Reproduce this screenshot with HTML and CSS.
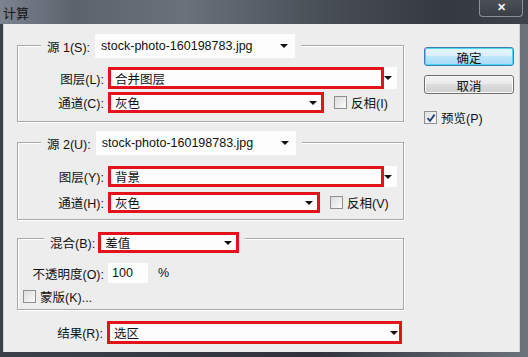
FILE: index.html
```html
<!DOCTYPE html>
<html lang="zh-CN">
<head>
  <meta charset="UTF-8" />
  <title>计算</title>
  <link rel="stylesheet" href="styles.css">
</head>
<body>
  <div class="window">
    <div class="titlebar">
      <span class="title">计算</span>
      <span class="close">✕</span>
    </div>

    <div class="client">
      <div class="main">

        <div class="group g1">
          <div class="group-head">
            <span class="head-label">源 1(S):</span>
            <div class="combo src"><span class="val">stock-photo-160198783.jpg</span><span class="arrow"></span></div>
          </div>
          <div class="row r-top">
            <span class="lbl">图层(L):</span>
            <div class="combo wide"><span class="mark">合并图层</span><span class="arrow"></span></div>
          </div>
          <div class="row r-ch">
            <span class="lbl">通道(C):</span>
            <div class="combo marked ch1"><span class="val">灰色</span><span class="arrow"></span></div>
            <label class="check"><span class="box"></span>反相(I)</label>
          </div>
        </div>

        <div class="group g2">
          <div class="group-head">
            <span class="head-label">源 2(U):</span>
            <div class="combo src"><span class="val">stock-photo-160198783.jpg</span><span class="arrow"></span></div>
          </div>
          <div class="row r-top2">
            <span class="lbl">图层(Y):</span>
            <div class="combo wide"><span class="mark">背景</span><span class="arrow"></span></div>
          </div>
          <div class="row r-ch2">
            <span class="lbl">通道(H):</span>
            <div class="combo marked ch2"><span class="val">灰色</span><span class="arrow"></span></div>
            <label class="check"><span class="box"></span>反相(V)</label>
          </div>
        </div>

        <div class="group g3">
          <div class="group-head blend-head">
            <span class="head-label">混合(B):</span>
            <div class="combo marked blend"><span class="val">差值</span><span class="arrow"></span></div>
          </div>
          <div class="row r-opacity">
            <span class="lbl">不透明度(O):</span>
            <div class="field">100</div>
            <span class="pct">%</span>
          </div>
          <label class="check mask"><span class="box"></span>蒙版(K)...</label>
        </div>

        <div class="row r-result">
          <span class="lbl">结果(R):</span>
          <div class="combo marked result"><span class="val">选区</span><span class="arrow"></span></div>
        </div>

      </div>

      <div class="side">
        <button class="btn btn-default">确定</button>
        <button class="btn">取消</button>
        <label class="check preview"><span class="box checked">
          <svg width="10" height="10" viewBox="0 0 10 10"><path d="M1.5 5.2 L4 7.8 L8.6 1.6" fill="none" stroke="#25407a" stroke-width="1.8"/></svg>
        </span>预览(P)</label>
      </div>
    </div>
  </div>
</body>
</html>
```

FILE: styles.css
```css
body {
  margin: 0;
  width: 528px;
  height: 357px;
  overflow: hidden;
  background: #2c3037;
  font-family: "Liberation Sans", "Noto Sans CJK SC", sans-serif;
  font-size: 12.5px;
  color: #111;
}

.window {
  width: 528px;
  height: 357px;
  background: linear-gradient(90deg, #3c4047 0%, #30343a 60%, #6d737b 100%);
}

.titlebar {
  height: 24px;
  display: flex;
  align-items: flex-start;
  background: linear-gradient(90deg, #7b838f 0%, #5c636d 14%, #6a717b 35%, #4a5058 60%, #34383f 85%, #3e434a 100%);
}

.title {
  padding: 3px 0 0 3px;
  color: #161616;
  font-size: 13px;
}

.close {
  margin-left: auto;
  margin-right: 5px;
  width: 42px;
  height: 16px;
  border: 1px solid #8b9097;
  border-top: none;
  border-radius: 0 0 4px 4px;
  background: linear-gradient(#4b5058, #3a3e45);
  color: #f2f2f2;
  font-size: 11px;
  font-weight: bold;
  text-align: center;
  line-height: 15px;
}

.client {
  display: flex;
  margin-left: 3px;
  width: 517px;
  height: 328px;
  border-left: 1px solid #cfd3d8;
  border-right: 1px solid #cfd3d8;
  background: #ededed;
  box-sizing: border-box;
  padding: 10px 0 0 13px;
}

.main {
  width: 387px;
  display: flex;
  flex-direction: column;
}

.group {
  border: 1px solid #a8a8a8;
  box-shadow: inset 1px 1px 0 #fff, 1px 1px 0 #fff;
  display: flex;
  flex-direction: column;
}

.g1 {
  margin-top: 11px;
  padding-bottom: 8px;
}

.g2 {
  margin-top: 20px;
  padding-bottom: 6px;
}

.g3 {
  margin-top: 18px;
  padding-bottom: 5px;
}

.group-head {
  display: flex;
  align-items: center;
  align-self: flex-start;
  height: 24px;
  margin: -12px 0 0 23px;
  padding: 0 6px;
  background: #ededed;
}

.head-label {
  margin-right: 5px;
}

.blend-head {
  height: 21px;
  margin: -7px 0 0 26px;
  padding: 0 6px 0 6px;
}

.blend-head .head-label {
  margin-right: 3px;
}

.row {
  display: flex;
  align-items: center;
}

.lbl {
  width: 86px;
  text-align: right;
  margin-right: 4px;
  white-space: nowrap;
}

.r-top { margin-top: 9px; height: 22px; }
.r-ch { margin-top: 3px; height: 21px; }
.r-top2 { margin-top: 11px; height: 21px; }
.r-ch2 { margin-top: 5px; height: 21px; }
.r-opacity { margin-top: 10px; height: 20px; }
.r-result { margin-top: 11px; height: 23px; }

.combo {
  display: flex;
  align-items: center;
  background: #fdfdfd;
  height: 100%;
  box-sizing: border-box;
}

.src {
  width: 200px;
  height: 24px;
  padding: 0 7px 0 6px;
}

.val {
  white-space: nowrap;
}

.arrow {
  margin-left: auto;
  width: 0;
  height: 0;
  border-left: 4px solid transparent;
  border-right: 4px solid transparent;
  border-top: 4px solid #111;
}

.wide {
  width: 289px;
  padding-right: 5px;
}

.mark {
  width: 276px;
  height: 100%;
  border: 3px solid #e3121b;
  box-sizing: border-box;
  padding-left: 4px;
  display: flex;
  align-items: center;
}

.marked {
  border: 3px solid #e3121b;
  padding: 0 4px 0 4px;
}

.ch1 { width: 216px; }
.ch2 { width: 212px; }
.blend { width: 141px; height: 21px; }
.result { width: 295px; padding-right: 1px; }

.check {
  display: flex;
  align-items: center;
  white-space: nowrap;
}

.box {
  width: 11px;
  height: 11px;
  border: 1px solid #8e8f8f;
  background: linear-gradient(135deg, #dcdcdc, #fbfbfb);
  margin-right: 4px;
  display: flex;
  align-items: center;
  justify-content: center;
}

.r-ch .check { margin-left: 10px; }
.r-ch2 .check { margin-left: 10px; }

.field {
  width: 40px;
  height: 20px;
  background: #fdfdfd;
  box-sizing: border-box;
  padding: 3px 0 0 4px;
}

.pct {
  margin-left: 10px;
}

.mask {
  margin: 5px 0 0 5px;
  height: 16px;
}

.side {
  margin-left: 20px;
  padding-top: 12px;
  width: 90px;
  display: flex;
  flex-direction: column;
}

.btn {
  font: inherit;
  color: #111;
  width: 90px;
  height: 19px;
  padding: 0;
  border: 1px solid #707070;
  border-radius: 3px;
  background: linear-gradient(#f3f3f3 0%, #ebebeb 45%, #dddddd 50%, #cfcfcf 100%);
  box-shadow: inset 0 0 0 1px #fbfbfb;
}

.btn-default {
  margin-top: 1px;
  border-color: #3c7fb1;
  background: linear-gradient(#e6f5fc 0%, #d9f0fc 45%, #bee6fd 50%, #a7d9f5 100%);
  box-shadow: inset 0 0 0 1px #48d8f8;
}

.btn + .btn {
  margin-top: 9px;
}

.preview {
  margin-top: 14px;
}

.box.checked {
  background: linear-gradient(135deg, #e0e0e0, #fbfbfb);
}
```
